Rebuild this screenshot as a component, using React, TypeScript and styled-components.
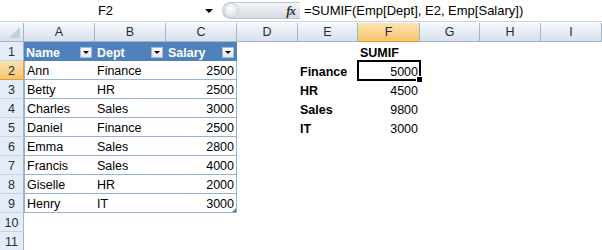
import React from 'react';
import styled, { createGlobalStyle, css } from 'styled-components';

const GlobalStyle = createGlobalStyle`
  html, body {
    margin: 0;
    padding: 0;
    background: #fff;
  }
  body {
    font-family: "Liberation Sans", Arial, sans-serif;
  }
`;

const COLS = [24, 71, 71, 71, 61, 60, 62, 60, 61, 61];
const LETTERS = ['A', 'B', 'C', 'D', 'E', 'F', 'G', 'H', 'I'];

const Page = styled.div`
  width: 602px;
  height: 250px;
  overflow: hidden;
  background: #fff;
  font-size: 12.5px;
  color: #000;
`;

// 编辑栏
const FormulaBar = styled.div`
  display: flex;
  align-items: center;
  height: 21px;
  border-bottom: 1px solid #c9d3e0;
`;

const NameBox = styled.div`
  width: 217px;
  height: 100%;
  display: flex;
  align-items: center;
  font-size: 13px;
`;

const NameText = styled.span`
  flex: 1;
  text-align: center;
  padding-left: 6px;
`;

const DropArrow = styled.span`
  width: 0;
  height: 0;
  border-left: 4px solid transparent;
  border-right: 4px solid transparent;
  border-top: 4px solid #000;
  margin-right: 4px;
`;

const FxPill = styled.div`
  width: 78px;
  height: 17px;
  margin-left: 5px;
  border-radius: 9px 0 0 9px;
  background: linear-gradient(#f4f6f9, #e3e7ed 55%, #d5dbe3);
  border: 1px solid #bcc5d1;
  border-right: none;
  box-sizing: border-box;
  display: flex;
  align-items: center;
  justify-content: space-between;
  padding: 0 5px 0 2px;
`;

const Knob = styled.span`
  width: 13px;
  height: 13px;
  border-radius: 50%;
  background: radial-gradient(circle at 40% 35%, #ffffff, #dde2e9 70%, #c3cbd5);
  box-shadow: 0 0 0 1px #cbd2dc;
`;

const Fx = styled.span`
  font-family: "Liberation Serif", "Times New Roman", serif;
  font-style: italic;
  font-weight: bold;
  font-size: 13px;
  color: #333;
  letter-spacing: -1px;
`;

const FormulaText = styled.div`
  padding-left: 4px;
  font-size: 13px;
  white-space: nowrap;
`;

// 工作表网格
const Sheet = styled.div`
  display: grid;
  grid-template-columns: ${COLS.map((c) => `${c}px`).join(' ')};
  grid-auto-rows: 19px;
  margin-top: 1px;
`;

const headerBg = css`
  background: linear-gradient(#f6f8fc, #e3e9f2 60%, #d9e1ec);
`;

const selectedBg = css`
  background: linear-gradient(#fbe3b0, #f8d58f 50%, #f4c569);
`;

const ColHead = styled.div<{ $sel?: boolean }>`
  ${(p) => (p.$sel ? selectedBg : headerBg)}
  box-sizing: border-box;
  border-right: 1px solid #9eb6ce;
  border-bottom: 1px solid ${(p) => (p.$sel ? '#f29536' : '#9eb6ce')};
  display: flex;
  align-items: center;
  justify-content: center;
  font-size: 12.5px;
  color: #1e2c41;
`;

const Corner = styled.div`
  ${headerBg}
  box-sizing: border-box;
  border-right: 1px solid #9eb6ce;
  border-bottom: 1px solid #9eb6ce;
  position: relative;
  &::after {
    content: '';
    position: absolute;
    right: 3px;
    bottom: 3px;
    width: 0;
    height: 0;
    border-left: 11px solid transparent;
    border-bottom: 11px solid #c4cfdd;
  }
`;

const RowHead = styled.div<{ $sel?: boolean }>`
  ${(p) => (p.$sel ? selectedBg : css`background: #e4ecf7;`)}
  box-sizing: border-box;
  border-right: 1px solid ${(p) => (p.$sel ? '#f29536' : '#9eb6ce')};
  border-bottom: 1px solid ${(p) => (p.$sel ? '#f29536' : '#c5d4e6')};
  display: flex;
  align-items: center;
  justify-content: center;
  font-size: 12.5px;
  color: #1e2c41;
  padding-top: 2px;
`;

type Kind = 'plain' | 'thead' | 'tbody';

const Cell = styled.div<{
  $kind: Kind;
  $right?: boolean;
  $bold?: boolean;
  $first?: boolean;
  $last?: boolean;
  $active?: boolean;
  $handle?: boolean;
}>`
  box-sizing: border-box;
  position: relative;
  display: flex;
  align-items: flex-end;
  justify-content: ${(p) => (p.$right ? 'flex-end' : 'flex-start')};
  padding: 0 2px 0 2px;
  line-height: 16px;
  white-space: nowrap;
  font-weight: ${(p) => (p.$bold ? 'bold' : 'normal')};
  ${(p) =>
    p.$kind === 'thead' &&
    css`
      background: #4f81bd;
      color: #fff;
      font-weight: bold;
      align-items: center;
      justify-content: space-between;
      padding-top: 2px;
    `}
  ${(p) =>
    p.$kind === 'tbody' &&
    css`
      border-bottom: 1px solid #95b3d7;
    `}
  ${(p) => p.$first && css`border-left: 1px solid #95b3d7;`}
  ${(p) => p.$last && css`border-right: 1px solid #95b3d7;`}
  ${(p) =>
    p.$active &&
    css`
      outline: 2px solid #000;
      outline-offset: -1px;
      z-index: 2;
      &::after {
        content: '';
        position: absolute;
        right: -3px;
        bottom: -3px;
        width: 5px;
        height: 5px;
        background: #000;
        border: 1px solid #fff;
      }
    `}
  ${(p) =>
    p.$handle &&
    css`
      &::after {
        content: '';
        position: absolute;
        right: 0;
        bottom: 0;
        width: 0;
        height: 0;
        border-left: 4px solid transparent;
        border-bottom: 4px solid #4f81bd;
      }
    `}
`;

const FilterBtn = styled.span`
  width: 12px;
  height: 11px;
  box-sizing: border-box;
  background: linear-gradient(#ffffff, #dfe5ee);
  border: 1px solid #a9bbd3;
  display: flex;
  align-items: center;
  justify-content: center;
  margin-right: 1px;
  margin-top: -1px;
  &::before {
    content: '';
    border-left: 3px solid transparent;
    border-right: 3px solid transparent;
    border-top: 3px solid #000;
  }
`;

const employees: [string, string, number][] = [
  ['Ann', 'Finance', 2500],
  ['Betty', 'HR', 2500],
  ['Charles', 'Sales', 3000],
  ['Daniel', 'Finance', 2500],
  ['Emma', 'Sales', 2800],
  ['Francis', 'Sales', 4000],
  ['Giselle', 'HR', 2000],
  ['Henry', 'IT', 3000],
];

const summary: [string, number][] = [
  ['Finance', 5000],
  ['HR', 4500],
  ['Sales', 9800],
  ['IT', 3000],
];

function Empty({ n }: { n: number }) {
  return (
    <>
      {Array.from({ length: n }).map((_, i) => (
        <Cell key={i} $kind="plain" />
      ))}
    </>
  );
}

export default function App() {
  const rows: React.ReactNode[] = [];

  // 第1行：表头
  rows.push(
    <React.Fragment key="r1">
      <RowHead>1</RowHead>
      {['Name', 'Dept', 'Salary'].map((h) => (
        <Cell key={h} $kind="thead">
          <span>{h}</span>
          <FilterBtn />
        </Cell>
      ))}
      <Cell $kind="plain" />
      <Cell $kind="plain" />
      <Cell $kind="plain" $bold>SUMIF</Cell>
      <Empty n={3} />
    </React.Fragment>
  );

  employees.forEach(([name, dept, salary], i) => {
    const r = i + 2;
    const sum = summary[i];
    rows.push(
      <React.Fragment key={`r${r}`}>
        <RowHead $sel={r === 2}>{r}</RowHead>
        <Cell $kind="tbody" $first>{name}</Cell>
        <Cell $kind="tbody">{dept}</Cell>
        <Cell $kind="tbody" $right $last $handle={r === 9}>
          {salary}
        </Cell>
        <Cell $kind="plain" />
        <Cell $kind="plain" $bold>{sum ? sum[0] : ''}</Cell>
        <Cell $kind="plain" $right $active={r === 2}>
          {sum ? sum[1] : ''}
        </Cell>
        <Empty n={3} />
      </React.Fragment>
    );
  });

  [10, 11].forEach((r) => {
    rows.push(
      <React.Fragment key={`r${r}`}>
        <RowHead>{r}</RowHead>
        <Empty n={9} />
      </React.Fragment>
    );
  });

  return (
    <Page>
      <GlobalStyle />
      <FormulaBar>
        <NameBox>
          <NameText>F2</NameText>
          <DropArrow />
        </NameBox>
        <FxPill>
          <Knob />
          <Fx>fx</Fx>
        </FxPill>
        <FormulaText>=SUMIF(Emp[Dept], E2, Emp[Salary])</FormulaText>
      </FormulaBar>
      <Sheet>
        <Corner />
        {LETTERS.map((l) => (
          <ColHead key={l} $sel={l === 'F'}>
            {l}
          </ColHead>
        ))}
        {rows}
      </Sheet>
    </Page>
  );
}
